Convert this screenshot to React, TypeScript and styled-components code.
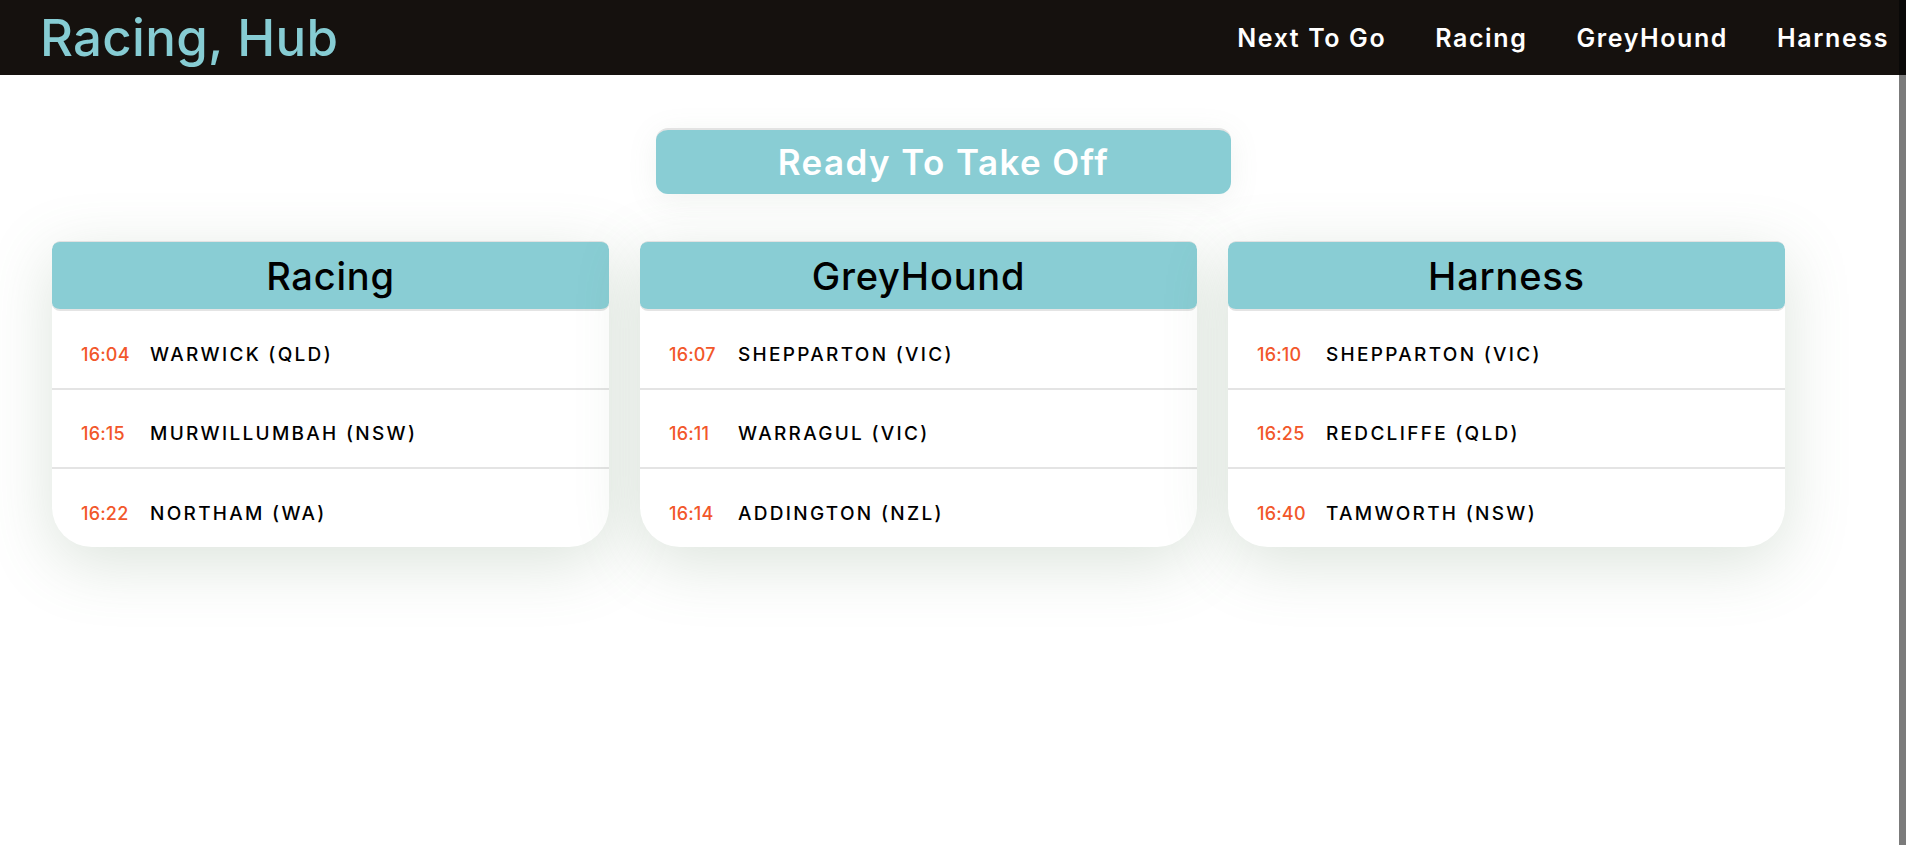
import React from "react";
import styled, { createGlobalStyle } from "styled-components";

const GlobalStyle = createGlobalStyle`
  * { box-sizing: border-box; }
  body {
    margin: 0;
    background: #ffffff;
    font-family: Inter, "Noto Sans", sans-serif;
  }
`;

const Page = styled.div`
  display: grid;
  grid-template-columns: 1fr 7px;
  min-height: 845px;
`;

const Rail = styled.div`
  background: linear-gradient(#0a0908 0 75px, #7b7b7b 75px);
`;

const Column = styled.div`
  display: flex;
  flex-direction: column;
  min-width: 0;
`;

const Header = styled.header`
  height: 75px;
  background: #15110e;
  display: flex;
  align-items: center;
  justify-content: space-between;
  padding: 0 10px 0 40px;
`;

const Brand = styled.h1`
  margin: 0;
  font-size: 51px;
  font-weight: 500;
  color: #86ccd3;
  letter-spacing: 0.3px;
`;

const Nav = styled.nav`
  display: flex;
  gap: 49px;
`;

const NavLink = styled.a`
  color: #ffffff;
  font-size: 25px;
  font-weight: 600;
  letter-spacing: 1.6px;
  text-decoration: none;
`;

const Content = styled.main`
  padding-top: 53px;
  display: flex;
  flex-direction: column;
`;

const BannerRow = styled.div`
  display: flex;
  justify-content: center;
  padding-right: 12px;
`;

const Banner = styled.div`
  width: 575px;
  height: 66px;
  border-radius: 12px;
  background: #89cdd4;
  border-top: 2px solid #e3e3e3;
  box-shadow: 0 6px 30px rgba(120, 140, 120, 0.1);
  display: flex;
  align-items: center;
  justify-content: center;
  color: #ffffff;
  font-size: 35px;
  font-weight: 600;
  letter-spacing: 1.4px;
`;

const CardGrid = styled.div`
  margin-top: 47px;
  padding-left: 52px;
  display: grid;
  grid-template-columns: repeat(3, 557px);
  gap: 31px;
`;

const Card = styled.section`
  background: #ffffff;
  border-radius: 8px 8px 40px 40px;
  box-shadow: 0 16px 64px rgba(96, 130, 96, 0.22);
  overflow: hidden;
`;

const CardHeader = styled.h2`
  margin: 0;
  height: 70px;
  background: #89cdd4;
  border-radius: 8px;
  border-top: 1px solid #e2e2e2;
  border-bottom: 2px solid #e4e4e4;
  display: flex;
  align-items: center;
  justify-content: center;
  font-size: 38px;
  font-weight: 500;
  letter-spacing: 0.8px;
  color: #000000;
`;

const RaceRow = styled.div<{ $last?: boolean }>`
  height: ${(p) => (p.$last ? "78px" : "79px")};
  display: flex;
  align-items: center;
  padding: 10px 0 0 29px;
  border-bottom: ${(p) => (p.$last ? "none" : "2px solid #e4e4e4")};
`;

const Time = styled.span`
  width: 69px;
  color: #f2572a;
  font-size: 18px;
  font-weight: 500;
  letter-spacing: 0.2px;
`;

const Venue = styled.span`
  color: #000000;
  font-size: 19px;
  font-weight: 500;
  letter-spacing: 2.3px;
`;

type Race = { time: string; venue: string };

const cards: { title: string; races: Race[] }[] = [
  {
    title: "Racing",
    races: [
      { time: "16:04", venue: "WARWICK (QLD)" },
      { time: "16:15", venue: "MURWILLUMBAH (NSW)" },
      { time: "16:22", venue: "NORTHAM (WA)" },
    ],
  },
  {
    title: "GreyHound",
    races: [
      { time: "16:07", venue: "SHEPPARTON (VIC)" },
      { time: "16:11", venue: "WARRAGUL (VIC)" },
      { time: "16:14", venue: "ADDINGTON (NZL)" },
    ],
  },
  {
    title: "Harness",
    races: [
      { time: "16:10", venue: "SHEPPARTON (VIC)" },
      { time: "16:25", venue: "REDCLIFFE (QLD)" },
      { time: "16:40", venue: "TAMWORTH (NSW)" },
    ],
  },
];

export default function App() {
  return (
    <>
      <GlobalStyle />
      <Page>
        <Column>
          <Header>
            <Brand>Racing, Hub</Brand>
            <Nav>
              <NavLink href="#">Next To Go</NavLink>
              <NavLink href="#">Racing</NavLink>
              <NavLink href="#">GreyHound</NavLink>
              <NavLink href="#">Harness</NavLink>
            </Nav>
          </Header>
          <Content>
            <BannerRow>
              <Banner>Ready To Take Off</Banner>
            </BannerRow>
            <CardGrid>
              {cards.map((c) => (
                <Card key={c.title}>
                  <CardHeader>{c.title}</CardHeader>
                  {c.races.map((r, i) => (
                    <RaceRow key={r.time} $last={i === c.races.length - 1}>
                      <Time>{r.time}</Time>
                      <Venue>{r.venue}</Venue>
                    </RaceRow>
                  ))}
                </Card>
              ))}
            </CardGrid>
          </Content>
        </Column>
        <Rail />
      </Page>
    </>
  );
}
